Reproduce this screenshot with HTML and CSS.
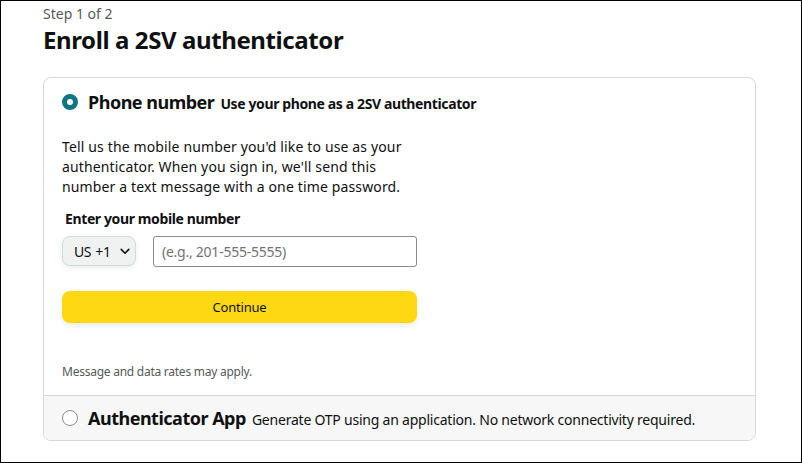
FILE: index.html
```html
<!DOCTYPE html>
<html>
<head>
<meta charset="utf-8">
<link rel="stylesheet" href="styles.css">
</head>
<body>
<div class="frame">
  <div class="step">Step 1 of 2</div>
  <h1 class="title">Enroll a 2SV authenticator</h1>
  <div class="card">
    <div class="option active">
      <div class="opt-head">
        <span class="radio checked"></span>
        <span class="opt-name">Phone number</span>
        <span class="opt-desc bold">Use your phone as a 2SV authenticator</span>
      </div>
      <p class="intro">Tell us the mobile number you'd like to use as your authenticator. When you sign in, we'll send this number a text message with a one time password.</p>
      <div class="label">Enter your mobile number</div>
      <div class="phone-row">
        <div class="country"><span class="cc">US +1</span>
          <svg class="chev" width="10" height="7" viewBox="0 0 10 7"><path d="M1.2 1.4 L5 5.2 L8.8 1.4" fill="none" stroke="#0f1111" stroke-width="1.6" stroke-linecap="round" stroke-linejoin="round"/></svg>
        </div>
        <div class="input">(e.g., 201-555-5555)</div>
      </div>
      <div class="btn">Continue</div>
      <div class="note">Message and data rates may apply.</div>
    </div>
    <div class="option alt">
      <div class="opt-head">
        <span class="radio"></span>
        <span class="opt-name app">Authenticator App</span>
        <span class="opt-desc">Generate OTP using an application. No network connectivity required.</span>
      </div>
    </div>
  </div>
</div>
</body>
</html>
```
FILE: styles.css
```css
html, body { margin: 0; padding: 0; background: #fff; }
body { font-family: "Noto Sans", "Open Sans", sans-serif; color: #0f1111; }
.frame {
  width: 802px; height: 463px; box-sizing: border-box;
  border: 1px solid #000;
  padding: 3px 0 0 42px;
}
.step { font-size: 14px; line-height: 20px; color: #565959; }
.title { margin: 0; font-size: 24px; line-height: 32px; font-weight: 700; letter-spacing: -0.4px; }
.card {
  margin-top: 21px;
  width: 713px; box-sizing: border-box;
  border: 1px solid #d5d9d9; border-radius: 8px;
  overflow: hidden;
}
.option.active { padding: 12px 18px 15px 18px; }
.opt-head { display: flex; align-items: baseline; }
.radio {
  width: 16px; height: 16px; box-sizing: border-box;
  border-radius: 50%; border: 1px solid #888c8c; background: #fff;
  align-self: center; margin-right: 10px; flex: none;
}
.radio.checked { border: 5px solid #0e7584; }
.opt-name { font-size: 18px; line-height: 24px; font-weight: 700; margin-right: 6px; letter-spacing: -0.5px; }
.opt-name.app { letter-spacing: -0.5px; margin-right: 6px; }
.opt-desc { font-size: 14px; line-height: 20px; letter-spacing: -0.22px; }
.opt-desc.bold { font-weight: 700; letter-spacing: -0.38px; }
.intro { margin: 23px 0 0 0; width: 345px; font-size: 14px; line-height: 20px; letter-spacing: 0.14px; }
.label { margin-top: 12px; font-size: 14px; line-height: 20px; font-weight: 700; padding-left: 3px; letter-spacing: -0.38px; }
.phone-row { display: flex; gap: 17px; margin-top: 7px; }
.country {
  width: 74px; height: 30px; box-sizing: border-box;
  background: #f0f2f2; border: 1px solid #d5d9d9; border-radius: 8px;
  box-shadow: 0 2px 5px rgba(213,217,217,.5);
  display: flex; align-items: center; padding-left: 11px; gap: 9px;
  font-size: 14px;
}
.cc { letter-spacing: -0.4px; word-spacing: 1px; }
.input {
  width: 264px; height: 31px; box-sizing: border-box;
  border: 1px solid #888c8c; border-radius: 3px;
  display: flex; align-items: center; padding-left: 8px;
  font-size: 14px; color: #6f7373; letter-spacing: -0.25px;
}
.btn {
  margin-top: 24px; width: 355px; height: 32px; box-sizing: border-box;
  background: #ffd814; border-radius: 8px;
  box-shadow: 0 2px 5px rgba(213,217,217,.5);
  display: flex; align-items: center; justify-content: center;
  font-size: 13px; letter-spacing: -0.2px;
}
.note { margin-top: 41px; font-size: 12px; line-height: 16px; color: #565959; letter-spacing: -0.25px; }
.option.alt {
  background: #f7f7f7; border-top: 1px solid #d5d9d9;
  padding: 10px 18px 10px 18px; height: 45px; box-sizing: border-box;
}
```
